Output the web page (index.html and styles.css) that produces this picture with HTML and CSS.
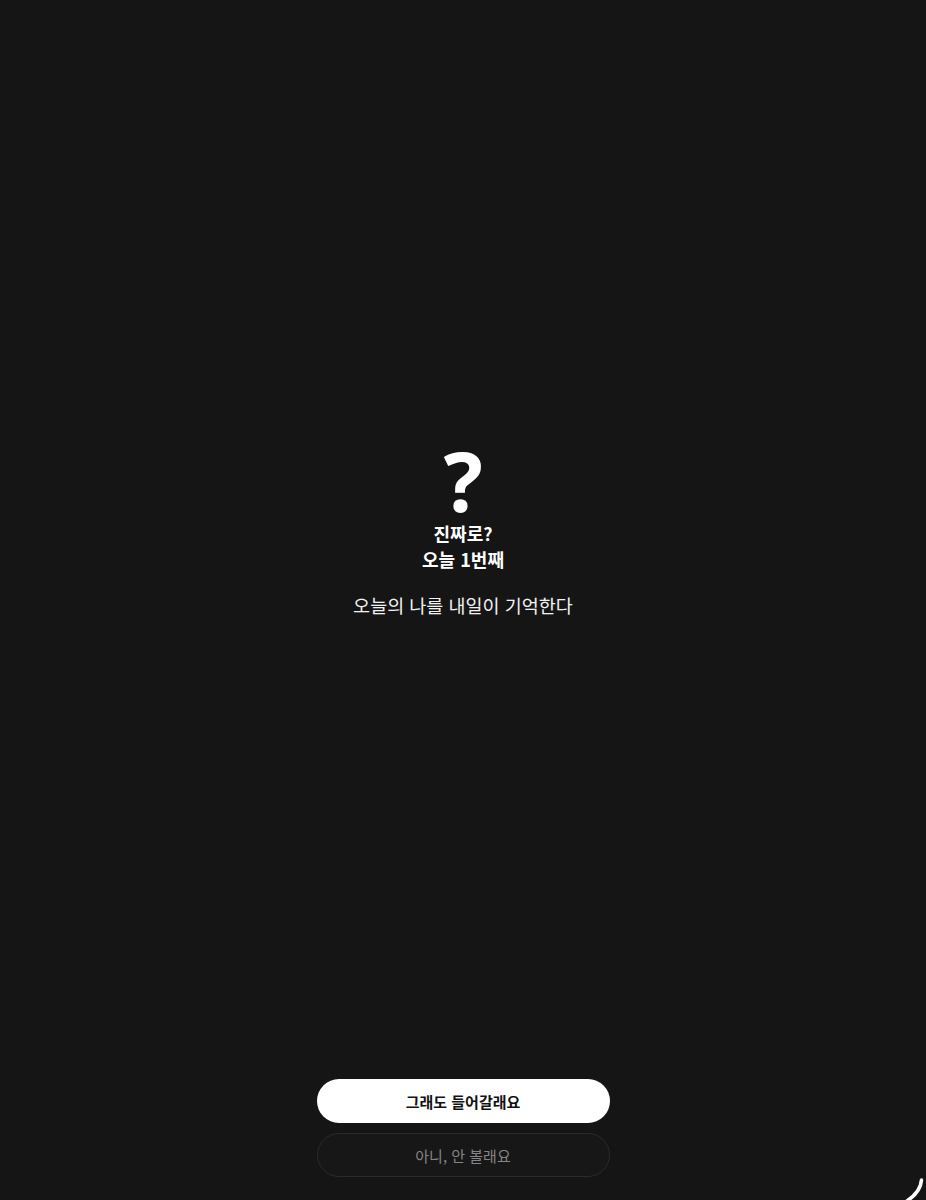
FILE: index.html
```html
<!DOCTYPE html>
<html lang="ko">
<head>
<meta charset="utf-8">
<title>진짜로?</title>
<link rel="stylesheet" href="styles.css">
</head>
<body>
<div class="screen">
  <main class="content">
    <div class="mark">?</div>
    <h1 class="title">진짜로?<br>오늘 1번째</h1>
    <p class="subtitle">오늘의 나를 내일이 기억한다</p>
  </main>
  <footer class="actions">
    <button class="btn btn-primary">그래도 들어갈래요</button>
    <button class="btn btn-secondary">아니, 안 볼래요</button>
  </footer>
  <svg class="corner" width="30" height="30" viewBox="0 0 30 30" aria-hidden="true">
    <path d="M25.5 10 Q24.5 22 11 31" fill="none" stroke="#fff" stroke-width="3.5" stroke-linecap="round"/>
  </svg>
</div>
</body>
</html>
```

FILE: styles.css
```css
* { box-sizing: border-box; }
html, body {
  margin: 0;
  padding: 0;
  background: #151515;
}
body {
  font-family: "Noto Sans CJK KR", "Noto Sans", sans-serif;
  color: #fff;
}
.screen {
  position: relative;
  width: 926px;
  height: 1200px;
  display: flex;
  flex-direction: column;
  overflow: hidden;
}
.content {
  flex: 1;
  display: flex;
  flex-direction: column;
  align-items: center;
  justify-content: center;
  padding-bottom: 20px;
}
.mark {
  font-family: "Noto Sans", "Liberation Sans", sans-serif;
  font-weight: 700;
  font-size: 82px;
  line-height: 80px;
  height: 80px;
}
.title {
  margin: 0;
  font-size: 18px;
  font-weight: 700;
  line-height: 26px;
  text-align: center;
}
.subtitle {
  margin: 19px 0 0;
  font-size: 18.5px;
  font-weight: 400;
  line-height: 28px;
  color: #f2f2f2;
}
.actions {
  display: flex;
  flex-direction: column;
  align-items: center;
  gap: 10px;
  padding-bottom: 23px;
}
.btn {
  width: 293px;
  height: 44px;
  border-radius: 22px;
  font-family: "Noto Sans CJK KR", "Noto Sans", sans-serif;
  font-size: 15px;
  cursor: pointer;
}
.btn-primary {
  background: #ffffff;
  color: #111111;
  border: none;
  font-weight: 700;
}
.btn-secondary {
  background: #171717;
  color: #858585;
  border: 1px solid #2b2b2b;
  font-weight: 400;
}
.corner {
  position: absolute;
  right: 0;
  bottom: 0;
}
```
